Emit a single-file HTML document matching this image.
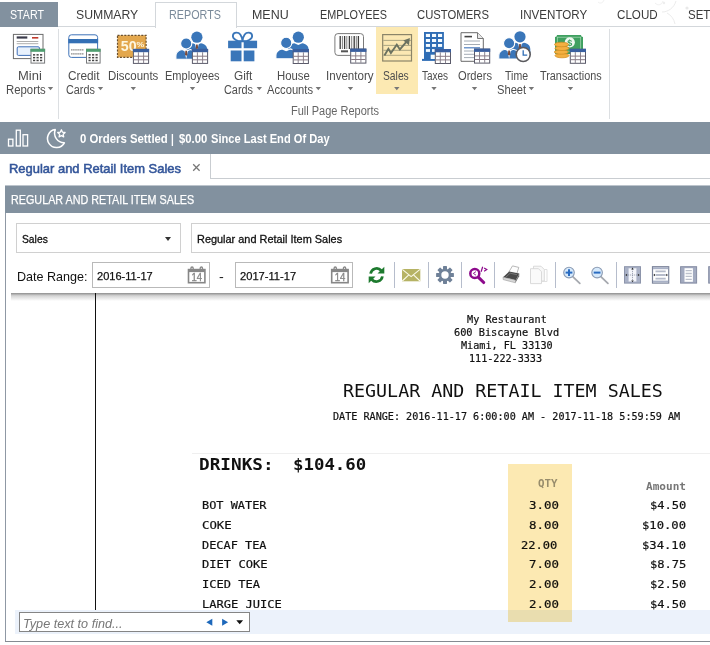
<!DOCTYPE html>
<html><head><meta charset="utf-8"><title>Regular and Retail Item Sales</title>
<style>
html,body{margin:0;padding:0;background:#fff;}
body{width:710px;height:645px;position:relative;overflow:hidden;font-family:"Liberation Sans",sans-serif;}
.a{position:absolute;}
.t{position:absolute;white-space:pre;line-height:20px;z-index:2;transform-origin:0 0;}
.bar{background:#82919f;}
.sep{position:absolute;width:1px;background:#dcdfe2;}
.tsep{position:absolute;width:1px;top:262px;height:26px;background:#b6bdcc;}
.ico{position:absolute;z-index:2;}
.arr{position:absolute;width:0;height:0;border-left:2.9px solid transparent;border-right:2.9px solid transparent;border-top:3.4px solid #707070;z-index:2;}
</style></head><body>
<!-- top tabs -->
<div class="a bar" style="left:0;top:2px;width:58px;height:24.5px"></div>
<div class="a" style="left:58px;top:26px;width:652px;height:1px;background:#d3d7db"></div>
<div class="a" style="left:155px;top:2px;width:80px;height:25px;border:1px solid #d3d7db;border-bottom:none;background:#fff"></div>
<!-- ribbon -->
<div class="a" style="left:375.5px;top:26.5px;width:42.5px;height:67.5px;background:#fce9b2"></div>
<div class="sep" style="left:58px;top:29px;height:90px"></div>
<div class="sep" style="left:609px;top:29px;height:90px"></div>
<!--ICONS-->
<svg class="ico" style="left:0;top:0" width="710" height="645" viewBox="0 0 710 645">
<defs>
<g id="tb"><rect x="0.5" y="0.5" width="15.2" height="14" fill="#fff" stroke="#5a5a6a" stroke-width="1"/><rect x="0" y="0" width="16.200" height="3.300" fill="#3a5f9f"/><path d="M5.500 3.300V14.200M10.700 3.300V14.200" stroke="#8a8590" stroke-width="1" fill="none"/><path d="M1 7.300H15.200M1 10.900H15.200" stroke="#8a7a85" stroke-width="1" fill="none"/></g>
<g id="cal"><rect x="0.5" y="0.5" width="13.6" height="13.8" fill="#fff" stroke="#77797b" stroke-width="1"/><rect x="0" y="0" width="14.6" height="3" fill="#4f9e70"/><g fill="#444"><rect x="2.5" y="5.3" width="2.200" height="1.500"/><rect x="6.0" y="5.3" width="2.200" height="1.500"/><rect x="9.5" y="5.3" width="2.200" height="1.500"/><rect x="2.5" y="8.1" width="2.200" height="1.500"/><rect x="6.0" y="8.1" width="2.200" height="1.500"/><rect x="9.5" y="8.1" width="2.200" height="1.500"/><rect x="2.5" y="10.9" width="2.200" height="1.500"/><rect x="6.0" y="10.9" width="2.200" height="1.500"/><rect x="9.5" y="10.9" width="2.200" height="1.500"/></g></g>
<g id="pers"><circle cx="0" cy="0" r="5.600"/><path d="M-10.300 15.800v-3.400c0-4 2.800-5.600 6.300-6.400l4 1.800l4-1.800c3.500.8 6.300 2.400 6.300 6.400v3.400z"/></g>
<g id="tie"><path d="M-1.900 6.300L0 15.500L1.900 6.300z" fill="#fff"/><path d="M-0.800 7.300h1.600l0.400 3.600l-1.200 1.600l-1.200-1.600z" fill="#7a4a3a"/></g>
</defs>
<g fill="none" stroke="#ececec" stroke-width="1"><path d="M662 12C668 12 674 8 676 1M667 13C671 15 674 19 675 24"/><path d="M598 2C600 4 603 3 604 0M655 3C658 6 662 5 663 1" stroke="#f0f0f0"/></g><circle cx="687" cy="8" r="1.600" fill="#e9e9e9"/><circle cx="664" cy="3" r="1.200" fill="#eee"/>
<!-- Mini reports -->
<rect x="13.4" y="34.400" width="29.600" height="24.200" fill="#fff" stroke="#6c6c6c" stroke-width="1"/>
<rect x="16.700" y="36.400" width="10.600" height="2.200" fill="#3a3a4a"/><rect x="32" y="37" width="6.300" height="1.600" fill="#c0392b"/>
<path d="M16.700 41.500H38.300M16.700 43.700H38.300" stroke="#9a9a9a" stroke-width="0.8"/>
<rect x="17.200" y="46.800" width="22.200" height="8.600" rx="1.200" fill="#e8f1fc" stroke="#3f6fb8" stroke-width="1"/>
<use href="#cal" x="30.500" y="48.800"/>
<!-- Credit cards -->
<rect x="68.800" y="34.800" width="28.800" height="22.600" rx="2.600" fill="#fff" stroke="#3f73b8" stroke-width="1"/>
<rect x="68.300" y="39" width="29.800" height="4.300" fill="#3470b5"/>
<path d="M71 49.800H84M71 53.800H84" stroke="#8a8a8a" stroke-width="1.300" stroke-dasharray="1.600 0.500"/>
<use href="#cal" x="86" y="48.800"/>
<!-- Discounts -->
<rect x="117.500" y="35.300" width="28.600" height="22" fill="#e3a74d" stroke="#6a5030" stroke-width="1.200" stroke-dasharray="2 1.400"/>
<text x="120.800" y="51.400" font-family="Liberation Sans, sans-serif" font-weight="700" font-size="15" fill="#fdf6e0" textLength="15.800" lengthAdjust="spacingAndGlyphs">50</text>
<text x="136.600" y="47.200" font-family="Liberation Sans, sans-serif" font-weight="700" font-size="7" fill="#fdf6e0" textLength="7.800" lengthAdjust="spacingAndGlyphs">%</text>
<use href="#tb" x="132.900" y="48.900"/>
<!-- Employees -->
<g fill="#3a76b9"><use href="#pers" x="196.900" y="37.200"/></g><use href="#tie" x="196.900" y="37.200"/>
<g fill="#3a76b9" stroke="#fff" stroke-width="1.100"><use href="#pers" x="186.200" y="43.500"/></g><use href="#tie" x="186.200" y="43.500"/>
<use href="#tb" x="191.900" y="48.900"/>
<!-- Gift -->
<g fill="#3a76b9"><rect x="228.100" y="40.700" width="13.400" height="7.500"/><rect x="243.700" y="40.700" width="13.400" height="7.500"/><rect x="230.700" y="50.500" width="10.800" height="10.800"/><rect x="243.700" y="50.500" width="10.700" height="10.800"/></g>
<path d="M242.500 41.200C238.500 41.700 232 39.500 233 35C233.800 31.800 238.500 32 240.300 34.500C241.600 36.300 242.300 38.500 242.500 41.200C242.700 38.500 243.400 36.300 244.700 34.500C246.500 32 251.200 31.800 252 35C253 39.500 246.500 41.700 242.500 41.200z" fill="none" stroke="#3a76b9" stroke-width="1.900" stroke-linejoin="round"/>
<!-- House accounts -->
<g fill="#3a76b9"><use href="#pers" x="298.300" y="37.200"/></g>
<g fill="#3a76b9" stroke="#fff" stroke-width="1.100"><use href="#pers" x="286.200" y="42.900"/></g>
<use href="#tb" x="292.700" y="49"/>
<!-- Inventory -->
<rect x="334.900" y="33.600" width="28.600" height="21.800" rx="3" fill="#fff" stroke="#7a7a7a" stroke-width="1"/>
<path d="M340.200 36v13M344.600 36v13M349.400 36v13M354.200 36v13M358.400 36v13" stroke="#3a3a3a" stroke-width="1.300"/>
<path d="M342.400 36v13M346.800 36v13M351.700 36v13M356.300 36v13" stroke="#4a4a4a" stroke-width="0.700"/>
<rect x="341" y="50.300" width="7" height="2" fill="#555"/>
<use href="#tb" x="350.200" y="48.600"/>
<!-- Sales -->
<rect x="382.700" y="34.600" width="28.800" height="26.400" fill="#fbe8b3" stroke="#8a8468" stroke-width="1.200"/>
<path d="M383.300 40.400H411M383.300 45.400H411M383.300 50.300H411M383.300 55.300H411" stroke="#a39d7c" stroke-width="0.900"/>
<path d="M384.400 55.600L388.400 48.800L390.900 53.100L396.800 44.700L399.900 49.400L406.800 41.300" stroke="#6b7260" stroke-width="1.900" fill="none" stroke-linejoin="miter"/>
<path d="M409.900 38L409 45.300L403.300 40.600z" fill="#6b7260"/>
<!-- Taxes -->
<rect x="424" y="32" width="19.900" height="27" fill="#2f6db5"/><rect x="422" y="58.900" width="13" height="2" fill="#2f6db5"/>
<g fill="#f4fbff"><rect x="425.9" y="33.9" width="4.100" height="3.1"/><rect x="432" y="33.9" width="4.100" height="3.1"/><rect x="438" y="33.9" width="4.100" height="3.1"/><rect x="425.9" y="39" width="4.100" height="3"/><rect x="432" y="39" width="4.100" height="3"/><rect x="438" y="39" width="4.100" height="3"/><rect x="425.9" y="44" width="4.100" height="2.9"/><rect x="432" y="44" width="4.100" height="2.9"/><rect x="438" y="44" width="4.100" height="2.9"/><rect x="425.9" y="49.1" width="4.100" height="2.8"/><rect x="432" y="49.1" width="4.100" height="2.8"/><rect x="438" y="49.1" width="4.100" height="2.8"/><rect x="430.700" y="54.700" width="6" height="4.300"/></g>
<use href="#tb" x="434.800" y="49"/>
<!-- Orders -->
<path d="M461 32.700H477.500L483.300 38.500V61.300H461z" fill="#fff" stroke="#6a6a6a" stroke-width="1"/>
<path d="M477.500 32.700V38.500H483.300" fill="#e8e8e8" stroke="#6a6a6a" stroke-width="0.900"/>
<rect x="464.500" y="35.800" width="7.500" height="1.600" fill="#444"/>
<path d="M464 41H480M464 44.500H480M464 51H474M464 54.300H474M464 57.600H474" stroke="#9aa3ad" stroke-width="0.900"/>
<path d="M464 47.800H480" stroke="#4f7fc0" stroke-width="1.200"/>
<use href="#tb" x="474" y="48.600"/>
<!-- Time sheet -->
<g fill="#3a76b9"><use href="#pers" x="520" y="36.800"/></g><use href="#tie" x="520" y="36.800"/>
<g fill="#3a76b9" stroke="#fff" stroke-width="1.100"><use href="#pers" x="509.100" y="43.300"/></g><use href="#tie" x="509.100" y="43.300"/>
<circle cx="523.200" cy="54.500" r="7" fill="#fff" stroke="#5a5a5e" stroke-width="1.600"/>
<path d="M523.200 50.300V55.200H527.200" stroke="#2f6db5" stroke-width="1.300" fill="none"/>
<!-- Transactions -->
<rect x="555" y="35" width="28" height="19" fill="#3fa060"/>
<circle cx="555" cy="35" r="2" fill="#fff"/><circle cx="583" cy="35" r="2" fill="#fff"/>
<rect x="557.300" y="37.200" width="23.400" height="14" fill="none" stroke="#a9d9b6" stroke-width="0.700"/>
<circle cx="569.800" cy="42.300" r="5.100" fill="#eef8f0"/>
<text x="567.300" y="45.800" font-family="Liberation Sans, sans-serif" font-weight="700" font-size="9" fill="#3fa060">$</text>
<g fill="#f3b041" stroke="#d18a1c" stroke-width="0.700"><ellipse cx="562" cy="55.600" rx="7" ry="2.200"/><ellipse cx="561.300" cy="52" rx="7" ry="2.200"/><ellipse cx="562" cy="48.300" rx="7" ry="2.200"/><ellipse cx="561.500" cy="44.500" rx="7" ry="2.300"/></g>
<use href="#tb" x="569.800" y="48.800"/>
<path d="M47.8 86.900h5.400l-2.700 3.300zM97.8 86.900h5.400l-2.700 3.300zM130.6 86.900h5.400l-2.700 3.300zM189.8 86.900h5.400l-2.700 3.300zM256.6 86.900h5.400l-2.700 3.300zM315.6 86.900h5.400l-2.700 3.300zM347.8 86.900h5.400l-2.700 3.300zM394.1 86.900h5.400l-2.700 3.300zM431.3 86.900h5.400l-2.700 3.300zM471.8 86.900h5.400l-2.700 3.300zM528.7 86.900h5.400l-2.700 3.300zM567.8 86.900h5.400l-2.700 3.300z" fill="#777"/>
<!-- status icons -->
<g fill="none" stroke="#fff" stroke-width="1.300"><rect x="8.500" y="139.200" width="4.400" height="6.800"/><rect x="16.300" y="130.200" width="4" height="15.800"/><rect x="23" y="134.700" width="4.600" height="11.300"/>
<path d="M55.300 129.600A9 9 0 1 0 64.400 142.800A9.600 9.600 0 0 1 55.300 129.600z" stroke-linejoin="round" stroke-width="1.500"/>
<path d="M61.400 129.800l1.100 2.400l2.600.3l-1.900 1.800l.5 2.600l-2.300-1.300l-2.300 1.300l.5-2.600l-1.900-1.800l2.600-.3z" stroke-width="1.300" stroke-linejoin="round"/></g>
<!-- doc tab close -->
<path d="M193.200 164.300L199.600 170.700M199.600 164.300L193.200 170.700" stroke="#777" stroke-width="1.250"/>
<!-- calendar icons -->
<g id="dcal" fill="none" stroke="#878787"><rect x="188.500" y="269.600" width="16.400" height="13.100" stroke-width="1.600"/><path d="M188.500 270.900H204.900" stroke-width="2.400"/><path d="M190.900 270.500V268.300A1.150 1.300 0 0 1 193.200 268.300V270.500M200.200 270.500V268.300A1.150 1.300 0 0 1 202.500 268.300V270.500" stroke-width="1.300"/></g>
<text x="191.500" y="281.200" font-family="Liberation Sans, sans-serif" font-size="10.500" fill="#878787" stroke="#878787" stroke-width="0.350" textLength="10.600" lengthAdjust="spacingAndGlyphs">14</text>
<use href="#dcal" x="143.200" y="0"/>
<text x="334.700" y="281.200" font-family="Liberation Sans, sans-serif" font-size="10.500" fill="#878787" stroke="#878787" stroke-width="0.350" textLength="10.600" lengthAdjust="spacingAndGlyphs">14</text>
<!-- refresh -->
<g fill="none" stroke="#1d7a2e" stroke-width="2.700"><path d="M370.600 273.600A6.100 6.100 0 0 1 381.200 270.500"/><path d="M382.400 276.400A6.100 6.100 0 0 1 371.800 279.500"/></g>
<path d="M384.300 266.800V273.600H377.500z" fill="#1d7a2e"/><path d="M368.700 283.200V276.400H375.500z" fill="#1d7a2e"/>
<!-- mail -->
<rect x="402" y="269" width="18.300" height="12.300" fill="#b6b364"/>
<path d="M402.300 269.400L411.150 276.600L420 269.400M402.300 281L408.800 274.800M420 281L413.500 274.800" fill="none" stroke="#fbfae8" stroke-width="1.100"/>
<!-- gear -->
<g transform="translate(445 275)"><g fill="#6f8198"><circle r="6.300"/><g id="teeth"><rect x="-2" y="-8.900" width="4" height="4" rx="0.600"/><rect x="-2" y="4.900" width="4" height="4" rx="0.600"/><rect x="-8.900" y="-2" width="4" height="4" rx="0.600"/><rect x="4.900" y="-2" width="4" height="4" rx="0.600"/></g><use href="#teeth" transform="rotate(45)"/></g><circle r="3.700" fill="#fff"/></g>
<!-- search purple -->
<circle cx="474.800" cy="273.500" r="4.500" fill="none" stroke="#8d0a8c" stroke-width="2.500"/>
<path d="M478.500 277.300L483.700 282.500" stroke="#8d0a8c" stroke-width="3.100" stroke-linecap="round"/>
<path d="M476 271.600L473.300 273.400L476 275.200" fill="none" stroke="#8d0a8c" stroke-width="0.900"/>
<path d="M482.700 266.800L481.100 271.800" stroke="#8d0a8c" stroke-width="1.200"/><path d="M484.100 267.900L486.800 269.600L484.100 271.300" fill="none" stroke="#8d0a8c" stroke-width="1.200"/>
<!-- printer -->
<path d="M508.500 272.500L512.500 265.900L518.800 267.400L516.500 274.600z" fill="#fdfdfd" stroke="#9a9a9a" stroke-width="0.700"/>
<path d="M503 277.200L509.200 271.400L519.300 273.600L515.800 280.200z" fill="#4a4a4a"/>
<path d="M503 277.200L515.800 280.200L515.400 282.800L503.200 279.600z" fill="#d8d8d8" stroke="#8a8a8a" stroke-width="0.500"/>
<path d="M515.800 280.200L519.300 273.600L519.200 276.200L515.400 282.800z" fill="#6a6a6a"/>
<path d="M506 277L510.200 273.200L517 274.700" fill="none" stroke="#8a8a8a" stroke-width="0.700"/>
<!-- copy (disabled) -->
<path d="M533.500 266.200H541L544.300 269.500V281H533.500z" fill="#f7f7f7" stroke="#d6d6d6" stroke-width="0.900"/>
<path d="M530.500 268.700H538.500L541.500 271.700V283.600H530.500z" fill="#fafafa" stroke="#d6d6d6" stroke-width="0.900"/>
<path d="M544.300 269.500H547V281.500H541.500" fill="none" stroke="#dcdcdc" stroke-width="0.900"/>
<!-- zoom in / out -->
<g id="mag"><path d="M573 276.800L579.800 283.300" stroke="#a6a9af" stroke-width="1.800" stroke-linecap="round"/><circle cx="569" cy="272.600" r="5.300" fill="#d6e9fb" stroke="#8b9bb3" stroke-width="1.100"/><path d="M565.600 272.600H572.400" stroke="#2a6cc2" stroke-width="2"/></g>
<path d="M569 269.200V276" stroke="#2a6cc2" stroke-width="2"/>
<use href="#mag" x="28.100" y="0"/>
<!-- layout icons -->
<rect x="624.500" y="266.700" width="16" height="16.400" fill="#a9b1c6" stroke="#8d95ab" stroke-width="1"/>
<rect x="628.600" y="268.300" width="7.800" height="13.200" fill="#f4f6fb"/>
<path d="M632.500 269V281M626 275H639" stroke="#7f879c" stroke-width="0.700" stroke-dasharray="1.200 0.800"/>
<path d="M632.500 267.600l1.300 1.800h-2.600zM632.500 282.300l1.300-1.800h-2.600zM625.300 275l1.800-1.300v2.600zM639.700 275l-1.800-1.300v2.600z" fill="#333"/>
<rect x="652.500" y="266.700" width="16.200" height="16.400" fill="#fff" stroke="#7d859b" stroke-width="1.200"/>
<rect x="653" y="267.200" width="15.200" height="2" fill="#a9b1c6"/><rect x="653" y="280.600" width="15.200" height="2" fill="#a9b1c6"/>
<path d="M655.500 271.400H665.700M655.500 275H665.700M655.500 278.600H665.700" stroke="#b5bbca" stroke-width="1.800"/>
<path d="M653.200 275l1.800-1.300v2.600zM668 275l-1.800-1.300v2.600z" fill="#333"/>
<rect x="680.600" y="266.700" width="16" height="16.400" fill="#a3abc0" stroke="#858da3" stroke-width="1"/>
<rect x="684.500" y="268.200" width="8.400" height="13.600" fill="#fff"/>
<path d="M685.600 270.600H691.800M685.600 273.500H691.800M685.600 276.400H691.800M685.600 279.300H691.800" stroke="#bcc1cc" stroke-width="1.300"/>
<rect x="708.700" y="266.700" width="5" height="16.400" fill="#a3abc0" stroke="#858da3" stroke-width="1"/>

</svg>


<!-- status bar -->
<div class="a bar" style="left:0;top:122px;width:710px;height:32px"></div>
<!-- doc tab -->
<div class="a" style="left:210px;top:154px;width:1px;height:25px;background:#c9cdd1"></div>
<div class="a" style="left:210px;top:178px;width:500px;height:1px;background:#c9cdd1"></div>
<!-- panel -->
<div class="a" style="left:5px;top:186px;width:1px;height:456px;background:#8f98a4"></div>
<div class="a" style="left:5px;top:641px;width:705px;height:1px;background:#858b92"></div>
<div class="a" style="left:5px;top:185px;width:705px;height:1px;background:#bcc4cc"></div>
<div class="a bar" style="left:5px;top:186px;width:705px;height:27px"></div>
<div class="a" style="left:16px;top:223px;width:165px;height:30px;border:1px solid #d0d0d0;box-sizing:border-box"></div>
<div class="a" style="left:191px;top:223px;width:530px;height:30px;border:1px solid #d0d0d0;box-sizing:border-box"></div>
<div class="a" style="left:164.5px;top:236.5px;width:0;height:0;border-left:3.2px solid transparent;border-right:3.2px solid transparent;border-top:4px solid #333"></div>
<div class="a" style="left:92px;top:262px;width:118px;height:26px;border:1px solid #b9b9b9;box-sizing:border-box"></div>
<div class="a" style="left:235px;top:262px;width:118px;height:26px;border:1px solid #b9b9b9;box-sizing:border-box"></div>
<div class="tsep" style="left:394px"></div>
<div class="tsep" style="left:428px"></div>
<div class="tsep" style="left:461px"></div>
<div class="tsep" style="left:494px"></div>
<div class="tsep" style="left:555px"></div>
<div class="tsep" style="left:616px"></div>
<!-- viewer -->
<div class="a" style="left:11px;top:292.5px;width:699px;height:8px;background:linear-gradient(#8e8e8e,#d4d4d4 35%,#fff)"></div>
<div class="a" style="left:95px;top:293px;width:1.2px;height:317px;background:#111"></div>
<div class="a" style="left:192px;top:452.5px;width:518px;height:1px;background:#efefef"></div>
<!-- find bar -->
<div class="a" style="left:15px;top:610px;width:695px;height:24px;background:#ecf2fb;z-index:3"></div>
<div class="a" style="left:19px;top:612px;width:231px;height:20px;background:#fff;border:1px solid #858585;box-sizing:border-box;z-index:3"></div>
<svg class="a" style="left:0;top:600px;z-index:4" width="300" height="40" viewBox="0 600 300 40"><path d="M212.300 618.800v6.900l-6-3.450z" fill="#1d68bb"/><path d="M222.100 618.800v6.900l6-3.450z" fill="#1d68bb"/><path d="M236.300 620.200h6.800l-3.400 4z" fill="#111"/></svg>
<!-- highlight overlay -->
<div class="a" style="left:508px;top:464px;width:64px;height:158px;background:#fce9b2;mix-blend-mode:multiply;z-index:6"></div>
<span class="t" style="left:10.38px;top:5.10px;font-size:13px;color:#fff;transform:scaleX(0.8200);">START</span>
<span class="t" style="left:76.36px;top:5.10px;font-size:13px;color:#3b3b3b;transform:scaleX(0.9400);">SUMMARY</span>
<span class="t" style="left:169.17px;top:5.10px;font-size:13px;color:#7a8a9a;transform:scaleX(0.8295);">REPORTS</span>
<span class="t" style="left:251.84px;top:5.10px;font-size:13px;color:#3b3b3b;transform:scaleX(0.9568);">MENU</span>
<span class="t" style="left:319.77px;top:5.10px;font-size:13px;color:#3b3b3b;transform:scaleX(0.8342);">EMPLOYEES</span>
<span class="t" style="left:417.43px;top:5.10px;font-size:13px;color:#3b3b3b;transform:scaleX(0.8683);">CUSTOMERS</span>
<span class="t" style="left:520.11px;top:5.10px;font-size:13px;color:#3b3b3b;transform:scaleX(0.8919);">INVENTORY</span>
<span class="t" style="left:617.41px;top:5.10px;font-size:13px;color:#3b3b3b;transform:scaleX(0.8932);">CLOUD</span>
<span class="t" style="left:687.62px;top:5.10px;font-size:13px;color:#3b3b3b;transform:scaleX(0.8828);">SETTINGS</span>
<span class="t" style="left:17.92px;top:66.10px;font-size:12px;color:#4d4d4d;transform:scaleX(1.0800);">Mini</span>
<span class="t" style="left:5.65px;top:80.10px;font-size:12px;color:#4d4d4d;transform:scaleX(0.9463);">Reports</span>
<span class="t" style="left:68.22px;top:66.10px;font-size:12px;color:#4d4d4d;transform:scaleX(0.9839);">Credit</span>
<span class="t" style="left:65.50px;top:80.10px;font-size:12px;color:#4d4d4d;transform:scaleX(0.9000);">Cards</span>
<span class="t" style="left:108.05px;top:66.10px;font-size:12px;color:#4d4d4d;transform:scaleX(0.9549);">Discounts</span>
<span class="t" style="left:164.78px;top:66.10px;font-size:12px;color:#4d4d4d;transform:scaleX(0.9190);">Employees</span>
<span class="t" style="left:234.02px;top:66.10px;font-size:12px;color:#4d4d4d;transform:scaleX(0.9833);">Gift</span>
<span class="t" style="left:224.39px;top:80.10px;font-size:12px;color:#4d4d4d;transform:scaleX(0.9065);">Cards</span>
<span class="t" style="left:277.05px;top:66.10px;font-size:12px;color:#4d4d4d;transform:scaleX(0.9455);">House</span>
<span class="t" style="left:266.60px;top:80.10px;font-size:12px;color:#4d4d4d;transform:scaleX(0.9327);">Accounts</span>
<span class="t" style="left:326.24px;top:66.10px;font-size:12px;color:#4d4d4d;transform:scaleX(0.9625);">Inventory</span>
<span class="t" style="left:383.14px;top:66.10px;font-size:12px;color:#4d4d4d;transform:scaleX(0.8586);">Sales</span>
<span class="t" style="left:421.60px;top:66.10px;font-size:12px;color:#4d4d4d;transform:scaleX(0.8323);">Taxes</span>
<span class="t" style="left:457.60px;top:66.10px;font-size:12px;color:#4d4d4d;transform:scaleX(0.9278);">Orders</span>
<span class="t" style="left:504.50px;top:66.10px;font-size:12px;color:#4d4d4d;transform:scaleX(0.8769);">Time</span>
<span class="t" style="left:496.77px;top:80.10px;font-size:12px;color:#4d4d4d;transform:scaleX(0.9300);">Sheet</span>
<span class="t" style="left:540.00px;top:66.10px;font-size:12px;color:#4d4d4d;transform:scaleX(0.9029);">Transactions</span>
<span class="t" style="left:290.58px;top:101.20px;font-size:12px;color:#666;transform:scaleX(0.9158);">Full Page Reports</span>
<span class="t" style="left:80.30px;top:129.00px;font-size:12.5px;color:#fff;transform:scaleX(0.9094);font-weight:700;">0 Orders Settled</span>
<span class="t" style="left:171.20px;top:129.00px;font-size:12.5px;color:#fff;transform:scaleX(0.8000);font-weight:700;">|</span>
<span class="t" style="left:179.10px;top:129.00px;font-size:12.5px;color:#fff;transform:scaleX(0.9032);font-weight:700;">$0.00</span>
<span class="t" style="left:210.91px;top:129.00px;font-size:12.5px;color:#fff;transform:scaleX(0.8894);font-weight:700;">Since Last End Of Day</span>
<span class="t" style="left:8.50px;top:158.50px;font-size:13px;color:#34569a;transform:scaleX(0.9959);-webkit-text-stroke:0.55px #34569a;">Regular and Retail Item Sales</span>
<span class="t" style="left:10.64px;top:190.30px;font-size:12.5px;color:#fff;transform:scaleX(0.8621);-webkit-text-stroke:0.25px #fff;">REGULAR AND RETAIL ITEM SALES</span>
<span class="t" style="left:21.80px;top:228.70px;font-size:11.5px;color:#111;transform:scaleX(0.8963);-webkit-text-stroke:0.3px #111;">Sales</span>
<span class="t" style="left:196.85px;top:228.70px;font-size:11.5px;color:#111;transform:scaleX(0.9497);-webkit-text-stroke:0.3px #111;">Regular and Retail Item Sales</span>
<span class="t" style="left:16.63px;top:266.50px;font-size:13px;color:#111;transform:scaleX(0.9662);">Date Range:</span>
<span class="t" style="left:97.04px;top:266.00px;font-size:11.5px;color:#111;transform:scaleX(0.9614);-webkit-text-stroke:0.25px #111;">2016-11-17</span>
<span class="t" style="left:219.40px;top:266.50px;font-size:13px;color:#111;transform:scaleX(1.1000);">-</span>
<span class="t" style="left:239.83px;top:266.00px;font-size:11.5px;color:#111;transform:scaleX(0.9684);-webkit-text-stroke:0.25px #111;">2017-11-17</span>
<span class="t" style="left:466.60px;top:310.20px;font-size:9.7px;color:#111;transform:scaleX(1.0520);font-family:'DejaVu Sans Mono', 'Liberation Mono', monospace;-webkit-text-stroke:0.2px #111;">My Restaurant</span>
<span class="t" style="left:453.74px;top:323.00px;font-size:9.7px;color:#111;transform:scaleX(1.0608);font-family:'DejaVu Sans Mono', 'Liberation Mono', monospace;-webkit-text-stroke:0.2px #111;">600 Biscayne Blvd</span>
<span class="t" style="left:460.70px;top:335.60px;font-size:9.7px;color:#111;transform:scaleX(1.0471);font-family:'DejaVu Sans Mono', 'Liberation Mono', monospace;-webkit-text-stroke:0.2px #111;">Miami, FL 33130</span>
<span class="t" style="left:469.16px;top:348.50px;font-size:9.7px;color:#111;transform:scaleX(1.0435);font-family:'DejaVu Sans Mono', 'Liberation Mono', monospace;-webkit-text-stroke:0.2px #111;">111-222-3333</span>
<span class="t" style="left:342.96px;top:381.00px;font-size:17.6px;color:#111;transform:scaleX(1.0410);font-family:'DejaVu Sans Mono', 'Liberation Mono', monospace;">REGULAR AND RETAIL ITEM SALES</span>
<span class="t" style="left:333.06px;top:406.50px;font-size:9.7px;color:#111;transform:scaleX(1.0444);font-family:'DejaVu Sans Mono', 'Liberation Mono', monospace;-webkit-text-stroke:0.2px #111;">DATE RANGE: 2016-11-17 6:00:00 AM - 2017-11-18 5:59:59 AM</span>
<span class="t" style="left:199.08px;top:454.80px;font-size:15.8px;color:#111;transform:scaleX(1.1210);font-weight:700;font-family:'DejaVu Sans Mono', 'Liberation Mono', monospace;">DRINKS:</span>
<span class="t" style="left:292.70px;top:454.80px;font-size:15.8px;color:#111;transform:scaleX(1.1000);font-weight:700;font-family:'DejaVu Sans Mono', 'Liberation Mono', monospace;">$104.60</span>
<span class="t" style="left:538.00px;top:473.40px;font-size:10.5px;color:#9a9a9a;transform:scaleX(1.0316);font-weight:700;font-family:'DejaVu Sans Mono', 'Liberation Mono', monospace;">QTY</span>
<span class="t" style="left:645.60px;top:476.00px;font-size:10.5px;color:#777;transform:scaleX(1.0541);font-weight:700;font-family:'DejaVu Sans Mono', 'Liberation Mono', monospace;">Amount</span>
<span class="t" style="left:202.39px;top:496.00px;font-size:10.7px;color:#111;transform:scaleX(1.1132);font-family:'DejaVu Sans Mono', 'Liberation Mono', monospace;-webkit-text-stroke:0.2px #111;">BOT WATER</span>
<span class="t" style="left:528.54px;top:496.00px;font-size:10.7px;color:#111;transform:scaleX(1.1625);font-family:'DejaVu Sans Mono', 'Liberation Mono', monospace;-webkit-text-stroke:0.2px #111;">3.00</span>
<span class="t" style="left:649.62px;top:496.00px;font-size:10.7px;color:#111;transform:scaleX(1.1306);font-family:'DejaVu Sans Mono', 'Liberation Mono', monospace;-webkit-text-stroke:0.2px #111;">$4.50</span>
<span class="t" style="left:202.35px;top:515.50px;font-size:10.7px;color:#111;transform:scaleX(1.1542);font-family:'DejaVu Sans Mono', 'Liberation Mono', monospace;-webkit-text-stroke:0.2px #111;">COKE</span>
<span class="t" style="left:528.54px;top:515.50px;font-size:10.7px;color:#111;transform:scaleX(1.1625);font-family:'DejaVu Sans Mono', 'Liberation Mono', monospace;-webkit-text-stroke:0.2px #111;">8.00</span>
<span class="t" style="left:642.46px;top:515.50px;font-size:10.7px;color:#111;transform:scaleX(1.1405);font-family:'DejaVu Sans Mono', 'Liberation Mono', monospace;-webkit-text-stroke:0.2px #111;">$10.00</span>
<span class="t" style="left:202.39px;top:535.50px;font-size:10.7px;color:#111;transform:scaleX(1.1132);font-family:'DejaVu Sans Mono', 'Liberation Mono', monospace;-webkit-text-stroke:0.2px #111;">DECAF TEA</span>
<span class="t" style="left:521.42px;top:535.50px;font-size:10.7px;color:#111;transform:scaleX(1.1306);font-family:'DejaVu Sans Mono', 'Liberation Mono', monospace;-webkit-text-stroke:0.2px #111;">22.00</span>
<span class="t" style="left:642.46px;top:535.50px;font-size:10.7px;color:#111;transform:scaleX(1.1405);font-family:'DejaVu Sans Mono', 'Liberation Mono', monospace;-webkit-text-stroke:0.2px #111;">$34.10</span>
<span class="t" style="left:202.37px;top:555.00px;font-size:10.7px;color:#111;transform:scaleX(1.1330);font-family:'DejaVu Sans Mono', 'Liberation Mono', monospace;-webkit-text-stroke:0.2px #111;">DIET COKE</span>
<span class="t" style="left:528.54px;top:555.00px;font-size:10.7px;color:#111;transform:scaleX(1.1625);font-family:'DejaVu Sans Mono', 'Liberation Mono', monospace;-webkit-text-stroke:0.2px #111;">7.00</span>
<span class="t" style="left:649.62px;top:555.00px;font-size:10.7px;color:#111;transform:scaleX(1.1306);font-family:'DejaVu Sans Mono', 'Liberation Mono', monospace;-webkit-text-stroke:0.2px #111;">$8.75</span>
<span class="t" style="left:202.37px;top:575.00px;font-size:10.7px;color:#111;transform:scaleX(1.1260);font-family:'DejaVu Sans Mono', 'Liberation Mono', monospace;-webkit-text-stroke:0.2px #111;">ICED TEA</span>
<span class="t" style="left:528.54px;top:575.00px;font-size:10.7px;color:#111;transform:scaleX(1.1625);font-family:'DejaVu Sans Mono', 'Liberation Mono', monospace;-webkit-text-stroke:0.2px #111;">2.00</span>
<span class="t" style="left:649.62px;top:575.00px;font-size:10.7px;color:#111;transform:scaleX(1.1306);font-family:'DejaVu Sans Mono', 'Liberation Mono', monospace;-webkit-text-stroke:0.2px #111;">$2.50</span>
<span class="t" style="left:202.37px;top:595.00px;font-size:10.7px;color:#111;transform:scaleX(1.1268);font-family:'DejaVu Sans Mono', 'Liberation Mono', monospace;-webkit-text-stroke:0.2px #111;">LARGE JUICE</span>
<span class="t" style="left:528.54px;top:595.00px;font-size:10.7px;color:#111;transform:scaleX(1.1625);font-family:'DejaVu Sans Mono', 'Liberation Mono', monospace;-webkit-text-stroke:0.2px #111;">2.00</span>
<span class="t" style="left:649.62px;top:595.00px;font-size:10.7px;color:#111;transform:scaleX(1.1306);font-family:'DejaVu Sans Mono', 'Liberation Mono', monospace;-webkit-text-stroke:0.2px #111;">$4.50</span>
<span class="t" style="left:23.39px;top:613.80px;font-size:12.5px;color:#777;transform:scaleX(1.0115);font-style:italic;z-index:4;">Type text to find...</span>
</body></html>
